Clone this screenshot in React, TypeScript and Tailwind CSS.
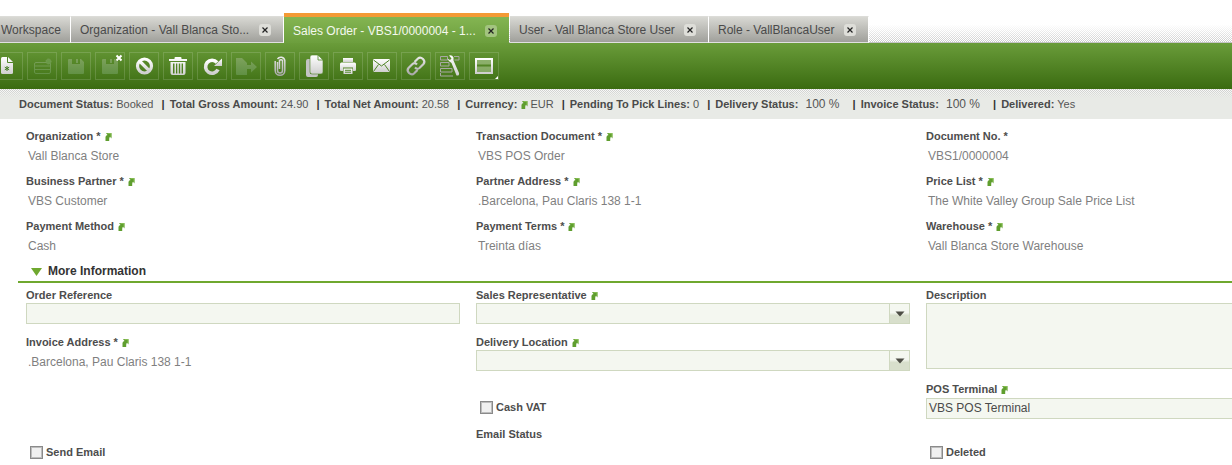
import React from 'react';

const Arrow = () => (
  <svg width="7" height="9" viewBox="0 0 7 9" className="inline-block ml-[4px] align-[-1px]">
    <path d="M0.5 9V5Q0.5 3.5 2.5 3L1 1H6.5V6.5L5 4.8Q4.2 5.5 4.2 7V9Z" fill="#5f9e2e" />
    <path d="M2.5 1.5H6V5" fill="none" stroke="#8fc45a" strokeWidth="0.8" />
  </svg>
);

const labelClass = "text-[11px] leading-[13px] font-bold text-[#4d4d4d] whitespace-nowrap";
const valueClass = "text-[12px] leading-[14px] text-[#7f7f7f] pl-[2px] whitespace-nowrap";

const Label = ({ text, link }: { text: string; link?: boolean }) => (
  <div className={labelClass}>
    {text}
    {link && <Arrow />}
  </div>
);

const ReadOnly = ({ label, value, link }: { label: string; value: string; link?: boolean }) => (
  <div className="h-[45px] pt-[11px]">
    <Label text={label} link={link} />
    <div className={`${valueClass} mt-[6px]`}>{value}</div>
  </div>
);

const Check = ({ text }: { text: string }) => (
  <div className="flex items-center gap-[3px]">
    <span className="w-[13px] h-[13px] border border-[#8a8a8a] bg-[#f0f0f0] shadow-[inset_0_0_0_1px_#bdbdbd]" />
    <span className={labelClass}>{text}</span>
  </div>
);

const Combo = () => (
  <div className="w-[434px] h-[21px] border border-[#cfd8c0] bg-[#f4f7f0] flex justify-end">
    <div className="w-[20px] h-full border-l border-[#cfd8c0] bg-[linear-gradient(#f4f7f0_0,#f4f7f0_45%,#d8dfcc_60%,#d8dfcc_100%)] flex items-center justify-center">
      <svg width="10" height="6" viewBox="0 0 10 6">
        <path d="M0.5 0.5H9.5L5 5.5Z" fill="#4d4d45" />
      </svg>
    </div>
  </div>
);

const Tab = ({ title, width, active, close = true }: { title: string; width: string; active?: boolean; close?: boolean }) => (
  <div
    className={
      active
        ? `${width} shrink-0 h-[30px] -mt-[3px] border-t-[4px] border-[#f39a35] bg-[linear-gradient(#84b552,#6c9e3d)] flex items-center pl-[9px] pr-[12px] pt-[1px] text-[#f4f8ee]`
        : `${width} shrink-0 h-[27px] border-t border-t-[#dcdcd8] border-r border-r-white border-b border-b-[#e0e0e0] bg-[linear-gradient(#d8d8d3,#a0a09b)] flex items-center pl-[9px] pr-[12px] text-[#4a4a4a]`
    }
  >
    <span className={`text-[12px] whitespace-nowrap flex-1 ${close ? '' : '-ml-[8px]'}`}>{title}</span>
    {close && (
      <span className={`w-[12px] h-[12px] rounded-[3px] flex items-center justify-center ${active ? 'bg-[#a3c47f]' : 'bg-[#deded9]'}`}>
        <svg width="8" height="8" viewBox="0 0 8 8">
          <path d="M1.5 1.5L6.5 6.5M6.5 1.5L1.5 6.5" stroke="#222" strokeWidth="1.2" />
        </svg>
      </span>
    )}
  </div>
);

const G = 'url(#tb)';
const GD = 'url(#tbd)';
const GC = 'url(#tbc)';
const DARK = '#4f8526';

const FLOPPY = 'M8 7H20L23 10V21Q23 22 22 22H8Q7 22 7 21V8Q7 7 8 7ZM11 7V12H19V7H17V11H15V7Z';

// coordinates are relative to each 30x28 button box
const toolIcons: React.ReactNode[] = [
  <>
    <path d="M9.5 5H15L20 10V20.5Q20 22 18.5 22H9.5Q8 22 8 20.5V6.5Q8 5 9.5 5Z" fill={G} />
    <path d="M14.5 5V10.5H20" fill="none" stroke={DARK} strokeWidth="1" />
    <path d="M14 14V19M11.8 15.2L16.2 17.8M16.2 15.2L11.8 17.8" stroke="#3f7a1e" strokeWidth="1" />
  </>,
  <>
    <rect x="7.5" y="10.5" width="16" height="11" rx="1.5" fill="none" stroke={GD} strokeWidth="1" />
    <path d="M7.5 14H23.5M7.5 17.5H23.5" stroke={GD} strokeWidth="1" />
    <circle cx="21.5" cy="9.5" r="2.5" fill="#6a9a48" stroke={GD} strokeWidth="1" strokeDasharray="1 0.6" />
  </>,
  <path d={FLOPPY} fill={GD} fillRule="evenodd" />,
  <>
    <path d={FLOPPY} fill={GD} fillRule="evenodd" />
    <path d="M21.5 3.5L26.5 8.5M26.5 3.5L21.5 8.5" stroke="#fff" strokeWidth="2" />
  </>,
  <>
    <circle cx="15.5" cy="14" r="7" fill="none" stroke={G} strokeWidth="3.2" />
    <path d="M10.5 9L20.5 19" stroke={G} strokeWidth="3.2" />
  </>,
  <path d="M6 7H11.5V6Q11.5 5 12.5 5H17.5Q18.5 5 18.5 6V7H24V9H6ZM7.5 10H22.5V21Q22.5 23 20.5 23H9.5Q7.5 23 7.5 21ZM10 11.5V21.5H11.5V11.5ZM13 11.5V21.5H14.3V11.5ZM15.8 11.5V21.5H17.2V11.5ZM18.6 11.5V21.5H20V11.5Z" fill={G} fillRule="evenodd" />,
  <>
    <path d="M21 17.5A6.5 6.5 0 1 1 20 10.5" fill="none" stroke={G} strokeWidth="3.6" />
    <path d="M17 14L25 6.5V14Z" fill={G} />
  </>,
  <>
    <path d="M5 6H11L16 11V23H6Q5 23 5 22Z" fill={GD} />
    <path d="M16 13H20V9.5L26 15L20 20.5V17H16Z" fill={GD} />
  </>,
  <path d="M12.5 10V18.5A2.5 2.5 0 0 0 17.5 18.5V8.5A1.8 1.8 0 0 0 14.5 8.5V17M10.2 9V18.5A4.8 4.8 0 0 0 19.8 18.5V8.5A4 4 0 0 0 12.5 7" fill="none" stroke={GC} strokeWidth="1.5" />,
  <>
    <path d="M7 9Q7 7 9 7H11V22H19V23Q19 25 17 25H9Q7 25 7 23Z" fill="#c4c4c4" />
    <path d="M11 5Q11 3 13 3H19L24 8V20Q24 22 22 22H13Q11 22 11 20Z" fill={G} stroke={DARK} strokeWidth="0.6" />
    <path d="M19 3V8H24" fill="none" stroke={DARK} strokeWidth="0.8" />
  </>,
  <>
    <path d="M10 6H20V10H10Z" fill={G} />
    <path d="M7 12Q7 10.5 8.5 10.5H21.5Q23 10.5 23 12V18Q23 19 22 19H20V15.5H10V19H8Q7 19 7 18Z" fill={G} />
    <path d="M10.5 16.5H19.5V22H10.5Z" fill={G} />
    <path d="M12 18.3H18M12 20.2H18" stroke={DARK} strokeWidth="1" />
  </>,
  <>
    <rect x="6" y="7" width="17" height="13" rx="1" fill={G} />
    <path d="M6.5 8L14.5 14L22.5 8M6.5 19.5L11.5 12.5M22.5 19.5L17.5 12.5" fill="none" stroke={DARK} strokeWidth="1" />
  </>,
  <path d="M13.5 10L17 6.5Q19.2 4.5 22 7Q24.5 9.7 22.5 12L18.5 16Q16.2 17.8 14 15.5M16.5 18L13 21.5Q10.8 23.5 8 21Q5.5 18.3 7.5 16L11.5 12Q13.8 10.2 16 12.5" fill="none" stroke={GC} strokeWidth="2.2" />,
  <>
    <path d="M5.5 4.5H12.5V8H5.5ZM5.5 10.5H14V14H5.5ZM5.5 16.5H17V20H5.5ZM5.5 21V24H18M19 4.5H24V8H19.5" fill="none" stroke="#a8a8a4" strokeWidth="1" />
    <path d="M14 3.5Q17 2.5 18.5 5.5L18.5 8.5L24 21Q24.5 24 21.5 23.5L16.5 11Q13.5 10 12.5 6.5L15 8L16.5 6.5Z" fill={G} />
  </>,
  <>
    <rect x="7" y="7" width="16" height="14" fill="none" stroke={G} strokeWidth="2" />
    <path d="M7 13.5H23" stroke={G} strokeWidth="2" />
    <rect x="8" y="8" width="14" height="4.5" fill="#cfe0bd" opacity="0.45" />
    <rect x="8" y="14.5" width="14" height="5.5" fill="#cfe0bd" opacity="0.45" />
    <path d="M29 24V27H26Z" fill="#fff" />
  </>,
];

const Sep = () => <span className="font-bold text-[#333] mx-[5px]">|</span>;
const K = ({ children }: { children: React.ReactNode }) => <span className="font-bold text-[#4a4a4a]">{children}</span>;

export default function App() {
  return (
    <div className="w-[1232px] h-[465px] overflow-hidden bg-white font-['Liberation_Sans',Arial,sans-serif]">
      <svg className="block w-0 h-0">
        <defs>
          <linearGradient id="tb" x1="0" y1="0" x2="0" y2="1">
            <stop offset="0" stopColor="#ffffff" />
            <stop offset="1" stopColor="#cfcfcf" />
          </linearGradient>
          <linearGradient id="tbc" x1="0" y1="0" x2="0" y2="1">
            <stop offset="0" stopColor="#e8e8e8" />
            <stop offset="1" stopColor="#a9a9a9" />
          </linearGradient>
          <linearGradient id="tbd" gradientUnits="userSpaceOnUse" x1="0" y1="5" x2="0" y2="24">
            <stop offset="0" stopColor="#7fa35e" />
            <stop offset="1" stopColor="#5f8f42" />
          </linearGradient>
        </defs>
      </svg>

      {/* tabs */}
      <div className="h-[43px] pt-[16px] flex items-start bg-[linear-gradient(#ffffff_58%,rgba(255,255,255,0.15)),repeating-conic-gradient(#c4c4c4_0_25%,#ffffff_0_50%)] bg-[size:100%_100%,2px_2px] border-b border-[#c4c4c4]">
        <Tab title="Workspace" width="w-[71px]" close={false} />
        <Tab title="Organization - Vall Blanca Sto..." width="w-[213px]" />
        <Tab title="Sales Order - VBS1/0000004 - 1..." width="w-[225px]" active />
        <div className="w-px shrink-0" />
        <Tab title="User - Vall Blanca Store User" width="w-[199px]" />
        <Tab title="Role - VallBlancaUser" width="w-[160px]" />
      </div>

      {/* toolbar */}
      <div className="h-[46px] bg-[linear-gradient(#6a9c3a,#3a6b10)] pt-[9px] flex gap-[4px] -ml-[7px]">
        {toolIcons.map((icon, i) => (
          <div key={i} className="w-[30px] h-[28px] shrink-0 border border-[#ffffff]/15">
            <svg width="30" height="28" viewBox="0 0 30 28" className="-m-px block overflow-visible">
              {icon}
            </svg>
          </div>
        ))}
      </div>

      {/* status bar */}
      <div className="h-[30px] pl-[19px] pt-[9px] text-[11px] leading-[13px] whitespace-nowrap text-[#555] bg-[linear-gradient(rgba(232,234,230,0.2),#e8eae6_9px),repeating-conic-gradient(#c4c4c4_0_25%,#ffffff_0_50%)] bg-[size:100%_100%,2px_2px]">
        <K>Document Status:</K> Booked <Sep />
        <K>Total Gross Amount:</K> 24.90 <Sep />
        <K>Total Net Amount:</K> 20.58 <Sep />
        <K>Currency:</K>
        <span className="-mr-[1px]">
          <Arrow />
        </span>{' '}
        EUR <Sep />
        <K>Pending To Pick Lines:</K> 0 <Sep />
        <K>Delivery Status:</K> <span className="text-[12px] ml-[4px] mr-[5px]">100 %</span> <Sep />
        <K>Invoice Status:</K> <span className="text-[12px] ml-[4px] mr-[5px]">100 %</span> <Sep />
        <K>Delivered:</K> Yes
      </div>

      {/* main fields */}
      <div className="pl-[26px]">
        <div className="grid grid-cols-[450px_450px_450px]">
          <ReadOnly label="Organization *" value="Vall Blanca Store" link />
          <ReadOnly label="Transaction Document *" value="VBS POS Order" link />
          <ReadOnly label="Document No. *" value="VBS1/0000004" />
          <ReadOnly label="Business Partner *" value="VBS Customer" link />
          <ReadOnly label="Partner Address *" value=".Barcelona, Pau Claris 138 1-1" link />
          <ReadOnly label="Price List *" value="The White Valley Group Sale Price List" link />
          <ReadOnly label="Payment Method" value="Cash" link />
          <ReadOnly label="Payment Terms *" value="Treinta días" link />
          <ReadOnly label="Warehouse *" value="Vall Blanca Store Warehouse" link />
        </div>
      </div>

      {/* section header */}
      <div className="ml-[18px] h-[29px] border-b-2 border-[#6fa82f] flex items-center pl-[13px] pt-[7px]">
        <svg width="11" height="8" viewBox="0 0 11 8" className="mt-[1px]">
          <path d="M0 0H11L5.5 8Z" fill="#6fa82f" />
        </svg>
        <span className="ml-[6px] text-[12px] font-bold text-[#333]">More Information</span>
      </div>

      {/* more fields */}
      <div className="pl-[26px] pt-[6px] grid grid-cols-[450px_450px_450px]">
        <div>
          <div className={labelClass}>Order Reference</div>
          <div className="w-[434px] h-[21px] mt-[1px] border border-[#cfd8c0] bg-[#f4f7f0]" />
          <div className="mt-[12px]">
            <Label text="Invoice Address *" link />
          </div>
          <div className={`${valueClass} mt-[6px]`}>.Barcelona, Pau Claris 138 1-1</div>
          <div className="mt-[77px] ml-[4px]">
            <Check text="Send Email" />
          </div>
        </div>
        <div>
          <Label text="Sales Representative" link />
          <div className="mt-[1px]">
            <Combo />
          </div>
          <div className="mt-[12px]">
            <Label text="Delivery Location" link />
          </div>
          <div className="mt-[1px]">
            <Combo />
          </div>
          <div className="mt-[30px] ml-[4px]">
            <Check text="Cash VAT" />
          </div>
          <div className={`${labelClass} mt-[14px]`}>Email Status</div>
        </div>
        <div>
          <div className={labelClass}>Description</div>
          <div className="w-[320px] h-[66px] mt-[1px] border border-[#cfd8c0] bg-[#f4f7f0]" />
          <div className="mt-[14px]">
            <Label text="POS Terminal" link />
          </div>
          <div className="w-[320px] h-[21px] mt-[2px] border border-[#cfd8c0] bg-[#f4f7f0] text-[12px] leading-[19px] pl-[2px] text-[#4a4a4a]">
            VBS POS Terminal
          </div>
          <div className="mt-[27px] ml-[4px]">
            <Check text="Deleted" />
          </div>
        </div>
      </div>
    </div>
  );
}
